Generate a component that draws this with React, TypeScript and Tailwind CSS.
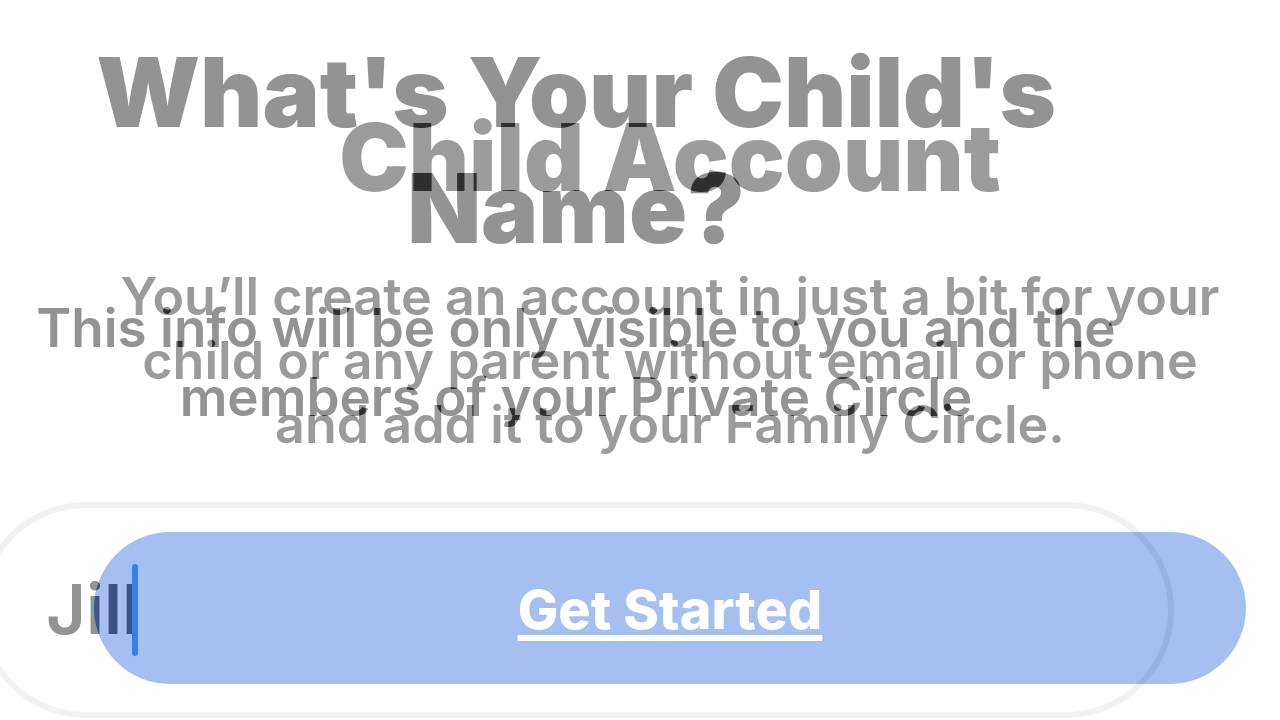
import { useState } from "react";

function NameScreen() {
  const [name, setName] = useState("Jill");
  return (
    <section className="col-start-1 row-start-1 -ml-[22px] mr-[106px] flex flex-col pt-[34px] text-center text-[#939393]">
      <h1 className="text-[96px] leading-[116px] font-black whitespace-nowrap">
        What's Your Child's
        <br />
        Name?
      </h1>
      <p className="mt-7 text-[53px] leading-[69px] font-semibold whitespace-nowrap">
        This info will be only visible to you and the
        <br />
        members of your Private Circle
      </p>
      <label className="mt-[70px] flex h-[216px] items-center rounded-full border-6 border-[#f2f2f2] pl-[62px]">
        <input
          type="text"
          aria-label="Child's name"
          value={name}
          onChange={(e) => setName(e.target.value)}
          className="field-sizing-content bg-transparent text-[69px] font-semibold caret-transparent outline-none"
        />
        <span className="-ml-2 h-[92px] w-[6px] rounded-full bg-[#91bffa]" />
      </label>
    </section>
  );
}

// Difference blending darkens the first screen by each colour used here.
function AccountScreen() {
  return (
    <section className="col-start-1 row-start-1 mr-[34px] ml-[94px] flex flex-col pt-[102px] text-center text-[#646464] mix-blend-difference">
      <h1 className="text-[93px] leading-[110px] font-black whitespace-nowrap">Child Account</h1>
      <p className="mt-[53px] text-[52px] leading-[64px] font-semibold whitespace-nowrap">
        You’ll create an account in just a bit for your
        <br />
        child or any parent without email or phone
        <br />
        and add it to your Family Circle.
      </p>
      <button
        type="button"
        className="mt-[75px] h-[152px] rounded-full bg-[#5a3f0f] pt-[2px] text-[54px] font-extrabold text-black underline decoration-6 underline-offset-[6px]"
      >
        Get Started
      </button>
    </section>
  );
}

export default function App() {
  return (
    <main className="isolate grid min-h-screen grid-cols-1 items-start overflow-hidden bg-white font-['Inter',sans-serif]">
      <NameScreen />
      <AccountScreen />
    </main>
  );
}
